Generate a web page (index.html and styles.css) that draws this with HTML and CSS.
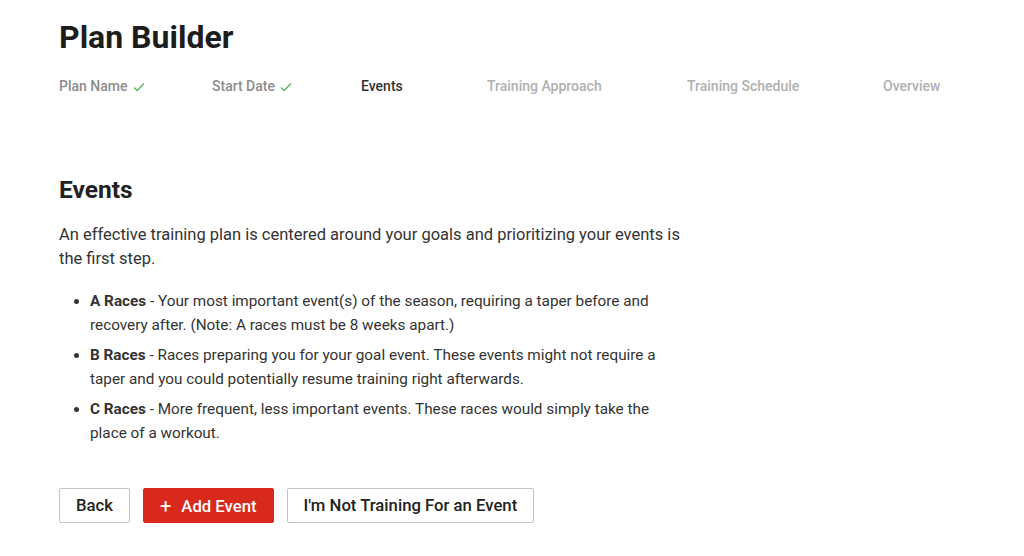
FILE: index.html
```html
<!DOCTYPE html>
<html>
<head>
<meta charset="utf-8">
<link rel="stylesheet" href="styles.css">
</head>
<body>
<div class="page">
  <h1 class="title">Plan Builder</h1>
  <nav class="steps">
    <span class="step done">Plan Name <svg class="check" viewBox="0 0 12 10" width="12" height="10"><path d="M1 5.5 L4.2 8.5 L11 1.5" fill="none" stroke="#5cb85c" stroke-width="1.4"/></svg></span>
    <span class="step done">Start Date <svg class="check" viewBox="0 0 12 10" width="12" height="10"><path d="M1 5.5 L4.2 8.5 L11 1.5" fill="none" stroke="#5cb85c" stroke-width="1.4"/></svg></span>
    <span class="step active">Events</span>
    <span class="step">Training Approach</span>
    <span class="step">Training Schedule</span>
    <span class="step">Overview</span>
  </nav>
  <section class="content">
    <h2 class="heading">Events</h2>
    <p class="intro">An effective training plan is centered around your goals and prioritizing your events is the first step.</p>
    <ul class="races">
      <li><b>A Races</b> - Your most important event(s) of the season, requiring a taper before and recovery after. (Note: A races must be 8 weeks apart.)</li>
      <li><b>B Races</b> - Races preparing you for your goal event. These events might not require a taper and you could potentially resume training right afterwards.</li>
      <li><b>C Races</b> - More frequent, less important events. These races would simply take the place of a workout.</li>
    </ul>
    <div class="actions">
      <button class="btn">Back</button>
      <button class="btn primary"><span class="plus">+</span>Add Event</button>
      <button class="btn">I'm Not Training For an Event</button>
    </div>
  </section>
</div>
</body>
</html>
```

FILE: styles.css
```css
* { box-sizing: border-box; }
body {
  margin: 0;
  background: #fff;
  font-family: Roboto, "Liberation Sans", sans-serif;
  color: #333;
}
.page {
  padding: 17px 80px 0 59px;
}
.title {
  margin: 0;
  font-size: 32px;
  font-weight: 700;
  color: #1d1d1d;
  line-height: 40px;
}
.steps {
  display: grid;
  grid-template-columns: 153px 149px 126px 200px 196px auto;
  width: 885px;
  margin-top: 19px;
  font-size: 14px;
  font-weight: 500;
  line-height: 20px;
}
.step { color: #b0b0b0; white-space: nowrap; }
.step.done { color: #8c8c8c; }
.step.active { color: #333; }
.check { margin-left: 2px; vertical-align: -1px; }
.content {
  width: 640px;
  margin-top: 79px;
}
.heading {
  margin: 0;
  font-size: 24.5px;
  font-weight: 700;
  color: #222;
  line-height: 30px;
}
.intro {
  margin: 18px 0 0;
  font-size: 16.5px;
  line-height: 24px;
  color: #333;
}
.races {
  width: 609px;
  margin: 18px 0 0;
  padding-left: 31px;
  font-size: 15.3px;
  line-height: 24px;
  color: #333;
}
.races li { margin-bottom: 6px; }
.races b { font-weight: 700; }
.actions {
  display: flex;
  gap: 13px;
  margin-top: 43px;
}
.btn {
  height: 35px;
  padding: 0 16px;
  border: 1px solid #c4c4c4;
  border-radius: 2px;
  background: #fff;
  font-family: inherit;
  font-size: 16.7px;
  font-weight: 500;
  color: #222;
}
.btn.primary {
  background: #d9291c;
  border-color: #d9291c;
  color: #fff;
}
.plus { font-size: 20px; font-weight: 400; margin-right: 10px; vertical-align: -1px; }
```
